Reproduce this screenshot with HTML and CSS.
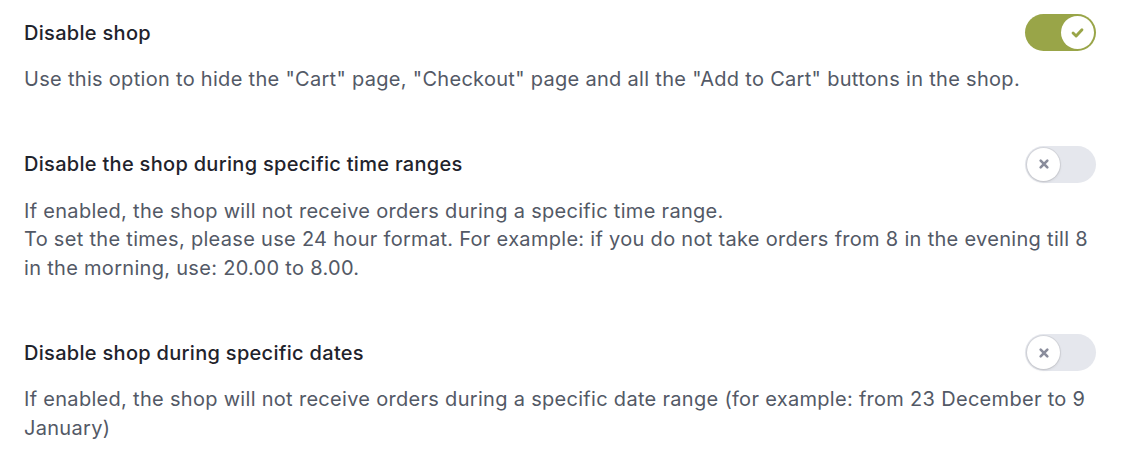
FILE: index.html
```html
<!DOCTYPE html>
<html>
<head>
<meta charset="utf-8">
<link rel="stylesheet" href="styles.css">
</head>
<body>
<div class="settings">
  <section class="option">
    <div class="option-head">
      <h3 class="option-title">Disable shop</h3>
      <span class="toggle toggle-on"><span class="knob"><svg viewBox="0 0 16 16" width="17" height="17"><path d="M3.8 8.4l2.9 2.9 5.5-5.9" fill="none" stroke="#99a548" stroke-width="2.7" stroke-linecap="round" stroke-linejoin="round"/></svg></span></span>
    </div>
    <p class="option-desc">Use this option to hide the "Cart" page, "Checkout" page and all the "Add to Cart" buttons in the shop.</p>
  </section>
  <section class="option">
    <div class="option-head">
      <h3 class="option-title">Disable the shop during specific time ranges</h3>
      <span class="toggle"><span class="knob"><svg viewBox="0 0 16 16" width="14" height="14"><path d="M4.2 4.2l7.6 7.6M11.8 4.2l-7.6 7.6" fill="none" stroke="#8a8d9c" stroke-width="3" stroke-linecap="round"/></svg></span></span>
    </div>
    <p class="option-desc">If enabled, the shop will not receive orders during a specific time range.<br>To set the times, please use 24 hour format. For example: if you do not take orders from 8 in the evening till 8 in the morning, use: 20.00 to 8.00.</p>
  </section>
  <section class="option">
    <div class="option-head">
      <h3 class="option-title">Disable shop during specific dates</h3>
      <span class="toggle"><span class="knob"><svg viewBox="0 0 16 16" width="14" height="14"><path d="M4.2 4.2l7.6 7.6M11.8 4.2l-7.6 7.6" fill="none" stroke="#8a8d9c" stroke-width="3" stroke-linecap="round"/></svg></span></span>
    </div>
    <p class="option-desc">If enabled, the shop will not receive orders during a specific date range (for example: from 23 December to 9 January)</p>
  </section>
</div>
</body>
</html>
```

FILE: styles.css
```css
html, body {
  margin: 0;
  background: #ffffff;
}
body {
  font-family: Inter, "Noto Sans", sans-serif;
  -webkit-font-smoothing: antialiased;
}
.settings {
  padding: 14px 26px 0 24px;
  display: flex;
  flex-direction: column;
  gap: 52px;
}
.option-head {
  display: flex;
  align-items: center;
  justify-content: space-between;
  height: 37px;
}
.option-title {
  margin: 0;
  font-size: 20px;
  line-height: 28px;
  letter-spacing: 0.3px;
  font-weight: 500;
  color: #1f232c;
}
.option-desc {
  margin: 14px 0 0;
  font-size: 20px;
  line-height: 28.5px;
  letter-spacing: 0.3px;
  color: #535966;
  max-width: 1070px;
}
.toggle {
  width: 71px;
  height: 37px;
  border-radius: 19px;
  background: #e5e7ed;
  display: flex;
  align-items: center;
  padding: 0 2px;
  box-sizing: border-box;
  flex-shrink: 0;
}
.toggle-on {
  background: #99a548;
  justify-content: flex-end;
}
.knob {
  width: 33px;
  height: 33px;
  border-radius: 50%;
  background: #ffffff;
  display: flex;
  align-items: center;
  justify-content: center;
  box-shadow: 0 0 0 1px rgba(0,0,0,0.06), 0 1px 3px rgba(0,0,0,0.12);
}
.toggle-on .knob {
  box-shadow: none;
}
```
